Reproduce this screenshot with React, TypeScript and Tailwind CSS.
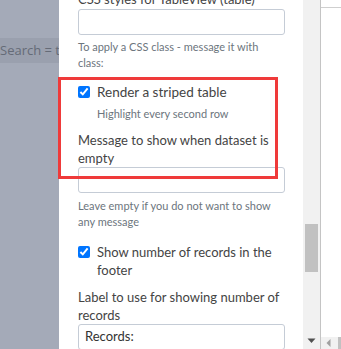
import React from "react";

const font = { fontFamily: 'Lato, "Open Sans", Arial, sans-serif' };

function Check() {
  return (
    <input
      type="checkbox"
      checked
      readOnly
      className="m-0 h-[12px] w-[12px] shrink-0 accent-[#0075ff]"
    />
  );
}

export default function App() {
  return (
    <div className="relative flex h-[349px] w-[341px] overflow-hidden bg-white" style={font}>
      {/* left dimmed area */}
      <div className="h-full w-[59px] shrink-0 bg-[#a4aab8] pt-[38px]">
        <div
          className="flex h-[25px] items-center whitespace-nowrap bg-[#9aa0ae] text-[13px] text-[#656b77]"
          style={{ fontFamily: '"Open Sans", Arial, sans-serif' }}
        >
          Search = test
        </div>
      </div>

      {/* panel */}
      <div className="h-full w-[244px] shrink-0 bg-white pl-[19px] text-[#444]">
        <div className="-mt-[10px] w-[207px]">
          <div className="text-[13px] leading-[18px] whitespace-nowrap">CSS styles for TableView (table)</div>
          <div className="mt-[1px] h-[26px] rounded-[3px] border border-[#c5ccd6] bg-white" />
          <div className="mt-[4px] text-[11px] leading-[16px] text-[#6c757d]">
            To apply a CSS class - message it with class:
          </div>

          <div className="mt-[12px] flex h-[18px] items-center gap-[7px]">
            <Check />
            <span className="text-[13.5px] leading-[18px] whitespace-nowrap">Render a striped table</span>
          </div>
          <div className="mt-[5px] pl-[19px] text-[11px] leading-[16px] text-[#6c757d]">
            Highlight every second row
          </div>
          <div className="mt-[9px] text-[13px] leading-[18px]">Message to show when dataset is empty</div>
          <div className="h-[26px] rounded-[3px] border border-[#c5ccd6] bg-white" />
          <div className="mt-[5px] text-[11px] leading-[16px] text-[#6c757d]">
            Leave empty if you do not want to show any message
          </div>

          <div className="mt-[13px] flex items-start gap-[7px]">
            <div className="flex h-[18px] items-center">
              <Check />
            </div>
            <span className="text-[13px] leading-[18px]">Show number of records in the footer</span>
          </div>
          <div className="mt-[9px] text-[13px] leading-[18px]">Label to use for showing number of records</div>
          <div className="flex h-[26px] items-center rounded-[3px] border border-[#c5ccd6] bg-white px-[6px] text-[13px] text-[#333]">
            Records:
          </div>
        </div>
      </div>

      {/* vertical scrollbar */}
      <div className="relative h-full w-[17px] shrink-0 bg-[#f1f1f1]">
        <div className="absolute left-[2px] top-[224px] h-[48px] w-[13px] bg-[#c1c1c1]" />
        <svg className="absolute left-[4px] top-[338px]" width="9" height="6" viewBox="0 0 9 6">
          <path d="M0.5 0.5 L8.5 0.5 L4.5 5 Z" fill="#505050" />
        </svg>
      </div>
      <div className="h-full w-[1px] shrink-0 bg-[#c4c4c4]" />

      {/* right area */}
      <div className="relative flex h-full flex-1 flex-col">
        <div className="mt-[7px] h-[1px] w-full bg-[#cfcfcf]" />
        <div className="absolute bottom-0 left-0 flex h-[12px] w-full items-center bg-[#f1f1f1]">
          <svg className="ml-[5px]" width="5" height="8" viewBox="0 0 5 8">
            <path d="M4.5 0 L4.5 8 L0.5 4 Z" fill="#a0a0a0" />
          </svg>
          <div className="ml-[7px] h-[12px] flex-1 bg-[#c1c1c1]" />
        </div>
      </div>

      {/* annotation box */}
      <div className="pointer-events-none absolute left-[58px] top-[77px] h-[102px] w-[220px] border-[3px] border-[#ef3a3a]" />
    </div>
  );
}
